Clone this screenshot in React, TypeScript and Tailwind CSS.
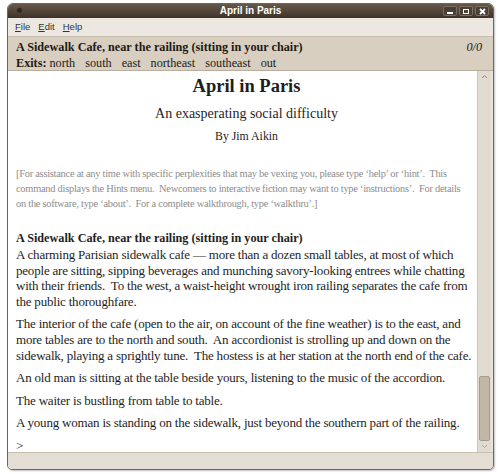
import React from "react";

const serif = { fontFamily: '"Liberation Serif", "DejaVu Serif", serif' };
const sans = { fontFamily: '"Liberation Sans", Arial, sans-serif' };

export default function App() {
  return (
    <div className="w-[500px] h-[474px] bg-white overflow-hidden relative">
      <div className="absolute left-[7px] top-[3px] w-[487px] h-[467px] rounded-t-[6px] rounded-b-[5px] border border-[#6f6659] bg-[#e9e4dc] flex flex-col overflow-hidden shadow-[1px_1px_2px_rgba(0,0,0,0.25)]">
        {/* title bar */}
        <div className="h-[14px] shrink-0 bg-gradient-to-b from-[#66584a] to-[#3f342a] relative flex items-center justify-center">
          <div className="absolute left-[8px] top-[3px] w-[7px] h-[7px] rounded-full bg-[#2e261f] border border-[#56493d]" />
          <span className="text-white text-[10px] font-bold leading-none" style={sans}>
            April in Paris
          </span>
          <div className="absolute right-[4px] top-[2px] flex gap-[2px]">
            {[0, 1, 2].map((i) => (
              <div key={i} className="w-[14px] h-[10px] rounded-[2px] bg-[#4a3f35] border border-[#7a6d60] flex items-center justify-center">
                {i === 0 && <div className="w-[6px] h-[2px] bg-white mt-[4px]" />}
                {i === 1 && <div className="w-[6px] h-[5px] border border-white" />}
                {i === 2 && (
                  <svg width="7" height="7" viewBox="0 0 7 7">
                    <path d="M1 1 L6 6 M6 1 L1 6" stroke="white" strokeWidth="1.8" />
                  </svg>
                )}
              </div>
            ))}
          </div>
        </div>
        {/* menu bar */}
        <div className="h-[18px] shrink-0 bg-[#ece8e1] flex items-center pl-[7px] gap-[8px] text-[9.5px] text-[#333]" style={sans}>
          <span><span className="underline">F</span>ile</span>
          <span><span className="underline">E</span>dit</span>
          <span><span className="underline">H</span>elp</span>
        </div>
        {/* status bar */}
        <div className="h-[34px] shrink-0 bg-[#d8cfc1] border-t border-[#c9bfae] px-[8px] pt-[2px] text-[12.2px] text-[#1d1a16] leading-[16px]" style={serif}>
          <div className="flex justify-between">
            <span className="font-bold">A Sidewalk Cafe, near the railing (sitting in your chair)</span>
            <span className="italic pr-[3px]">0/0</span>
          </div>
          <div className="whitespace-nowrap">
            <span className="font-bold">Exits:</span>
            <span className="ml-[3px]">north</span>
            <span className="ml-[10px]">south</span>
            <span className="ml-[10px]">east</span>
            <span className="ml-[10px]">northeast</span>
            <span className="ml-[10px]">southeast</span>
            <span className="ml-[10px]">out</span>
          </div>
        </div>
        {/* content */}
        <div className="flex-1 flex min-h-0 border-t border-[#b9ae9d]">
          <div className="flex-1 min-w-0 overflow-hidden bg-white pl-[8px] text-[#1e1e1e] text-[13px] tracking-[-0.2px] leading-[15.6px] whitespace-nowrap" style={serif}>
            <div className="text-center font-bold text-[18.5px] tracking-normal leading-[24px] mt-[3px]">April in Paris</div>
            <div className="text-center text-[14px] tracking-normal leading-[18px] mt-[7px]">An exasperating social difficulty</div>
            <div className="text-center text-[11.8px] tracking-normal leading-[15px] mt-[6px]">By Jim Aikin</div>
            <div className="text-[#8d8d8d] text-[10.4px] tracking-[-0.25px] leading-[14.8px] mt-[23px]">
              [For assistance at any time with specific perplexities that may be vexing you, please type ‘help’ or ‘hint’.&nbsp; This
              <br />
              command displays the Hints menu.&nbsp; Newcomers to interactive fiction may want to type ‘instructions’.&nbsp; For details
              <br />
              on the software, type ‘about’.&nbsp; For a complete walkthrough, type ‘walkthru’.]
            </div>
            <div className="mt-[20px] font-bold text-[12.2px] tracking-normal">A Sidewalk Cafe, near the railing (sitting in your chair)</div>
            <div>
              A charming Parisian sidewalk cafe — more than a dozen small tables, at most of which
              <br />
              people are sitting, sipping beverages and munching savory-looking entrees while chatting
              <br />
              with their friends.&nbsp; To the west, a waist-height wrought iron railing separates the cafe from
              <br />
              the public thoroughfare.
            </div>
            <div className="mt-[7px]">
              The interior of the cafe (open to the air, on account of the fine weather) is to the east, and
              <br />
              more tables are to the north and south.&nbsp; An accordionist is strolling up and down on the
              <br />
              sidewalk, playing a sprightly tune.&nbsp; The hostess is at her station at the north end of the cafe.
            </div>
            <div className="mt-[7px]">An old man is sitting at the table beside yours, listening to the music of the accordion.</div>
            <div className="mt-[7px]">The waiter is bustling from table to table.</div>
            <div className="mt-[7px]">A young woman is standing on the sidewalk, just beyond the southern part of the railing.</div>
            <div className="mt-[7px]">&gt;</div>
          </div>
          {/* scrollbar */}
          <div className="w-[14px] shrink-0 bg-[#e2dbd1] border-l border-[#cfc6b8] flex flex-col mr-[2px]">
            <div className="h-[11px] flex items-center justify-center">
              <svg width="7" height="5" viewBox="0 0 7 5"><path d="M1 4 L3.5 1.5 L6 4" stroke="#8a8178" fill="none" strokeWidth="1" /></svg>
            </div>
            <div className="flex-1" />
            <div className="h-[65px] mx-[1px] rounded-[2px] bg-[#c2b6a6] border border-[#a89b8a]" />
            <div className="h-[11px] flex items-center justify-center">
              <svg width="7" height="5" viewBox="0 0 7 5"><path d="M1 1 L3.5 3.5 L6 1" stroke="#b0a89e" fill="none" strokeWidth="1" /></svg>
            </div>
          </div>
        </div>
        {/* bottom bar */}
        <div className="h-[17px] shrink-0 bg-[#e3ddd3] border-t border-[#c9bfae]" />
      </div>
    </div>
  );
}
